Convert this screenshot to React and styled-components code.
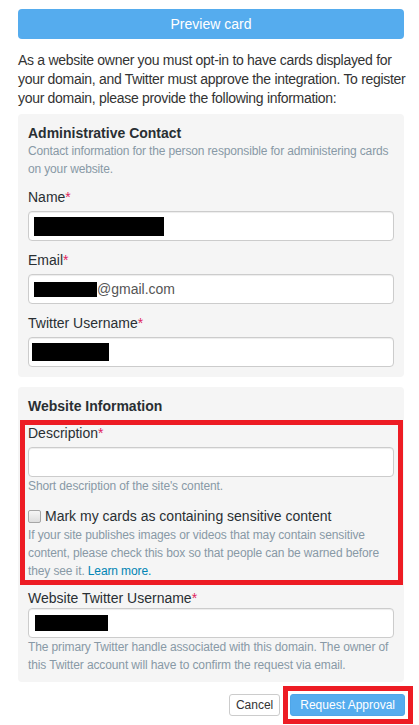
import React from 'react';
import styled, { createGlobalStyle } from 'styled-components';

const GlobalStyle = createGlobalStyle`
  body {
    margin: 0;
    background: #fff;
    font-family: "Liberation Sans", Arial, sans-serif;
    color: #333;
  }
`;

const Page = styled.div`
  padding: 9px 15px 0 18px;
`;

const PreviewButton = styled.button`
  display: block;
  width: 100%;
  height: 30px;
  border: none;
  border-radius: 4px;
  background: #55acee;
  color: #fff;
  font-family: inherit;
  font-size: 14px;
`;

const Intro = styled.p`
  margin: 12px 0 6px;
  font-size: 14px;
  line-height: 19px;
  letter-spacing: -0.3px;
  white-space: nowrap;
  color: #333;
`;

const Panel = styled.section`
  background: #f5f5f5;
  border-radius: 4px;
  padding: 10px 10px ${(p) => p.$pb ?? 10}px;
  margin-bottom: ${(p) => p.$mb ?? 10}px;
`;

const PanelTitle = styled.h3`
  margin: 0;
  font-size: 14px;
  line-height: 18px;
  font-weight: bold;
  color: #292f33;
`;

const PanelSub = styled.p`
  margin: 0 0 11px;
  font-size: 12px;
  line-height: 18px;
  letter-spacing: -0.15px;
  white-space: nowrap;
  color: #8899a6;
`;

const Field = styled.div`
  margin-top: ${(p) => p.$mt || 0}px;
  margin-bottom: 11px;
  &:last-child {
    margin-bottom: 0;
  }
`;

const Label = styled.div`
  font-size: 14px;
  line-height: 16px;
  color: #292f33;
  margin-bottom: ${(p) => (p.$tight ? 2 : 6)}px;
`;

const Req = styled.span`
  color: #e0245e;
`;

const InputBox = styled.div`
  box-sizing: border-box;
  height: 30px;
  display: flex;
  align-items: center;
  padding: 0 ${(p) => p.$pl || 5}px;
  background: #fff;
  border: 1px solid #ccc;
  border-radius: 4px;
  box-shadow: inset 0 1px 1px rgba(0, 0, 0, 0.075);
  font-size: 14px;
  color: #555;
`;

const Redaction = styled.span`
  display: inline-block;
  background: #000;
  width: ${(p) => p.$w}px;
  height: ${(p) => p.$h}px;
`;

const Help = styled.div`
  font-size: 12px;
  line-height: 18px;
  letter-spacing: -0.12px;
  white-space: nowrap;
  color: #8899a6;
`;

const Link = styled.a`
  color: #0084b4;
  text-decoration: none;
`;

const Highlight = styled.div`
  margin: 5px -9px 0 -8px;
  border: 5px solid #ed1c24;
  padding: 0 4px 0 3px;
`;

const CheckRow = styled.label`
  display: flex;
  align-items: center;
  gap: 4px;
  margin-top: 12px;
  font-size: 14px;
  line-height: 19px;
  color: #292f33;
`;

const CheckBox = styled.span`
  box-sizing: border-box;
  width: 13px;
  height: 13px;
  border: 1px solid #a6a6a6;
  border-radius: 2px;
  background: linear-gradient(#f6f6f6, #dedede);
`;

const Actions = styled.div`
  display: flex;
  justify-content: flex-end;
  align-items: center;
  gap: 3px;
  margin: 4px -9px 0 0;
`;

const CancelButton = styled.button`
  box-sizing: border-box;
  height: 22px;
  padding: 0 6px;
  border: 1px solid #ccc;
  border-radius: 3px;
  background: #fff;
  color: #333;
  font-family: inherit;
  font-size: 12px;
`;

const MarkBox = styled.div`
  display: flex;
  border: 5px solid #ed1c24;
  padding: 3px 3px 3px 2px;
`;

const ApproveButton = styled.button`
  box-sizing: border-box;
  height: 22px;
  padding: 0 9px;
  border: 1px solid #4fa6e8;
  border-radius: 3px;
  background: #55acee;
  color: #fff;
  font-family: inherit;
  font-size: 12px;
`;

export default function App() {
  return (
    <Page>
      <GlobalStyle />
      <PreviewButton>Preview card</PreviewButton>
      <Intro>
        As a website owner you must opt-in to have cards displayed for
        <br />
        your domain, and Twitter must approve the integration. To register
        <br />
        your domain, please provide the following information:
      </Intro>

      <Panel>
        <PanelTitle>Administrative Contact</PanelTitle>
        <PanelSub>
          Contact information for the person responsible for administering cards
          <br />
          on your website.
        </PanelSub>
        <Field>
          <Label>
            Name<Req>*</Req>
          </Label>
          <InputBox>
            <Redaction $w={130} $h={19} />
          </InputBox>
        </Field>
        <Field>
          <Label>
            Email<Req>*</Req>
          </Label>
          <InputBox>
            <Redaction $w={63} $h={15} />
            @gmail.com
          </InputBox>
        </Field>
        <Field>
          <Label>
            Twitter Username<Req>*</Req>
          </Label>
          <InputBox $pl={3}>
            <Redaction $w={77} $h={18} />
          </InputBox>
        </Field>
      </Panel>

      <Panel $pb={8} $mb={0}>
        <PanelTitle>Website Information</PanelTitle>
        <Highlight>
          <Label>
            Description<Req>*</Req>
          </Label>
          <InputBox />
          <Help>Short description of the site's content.</Help>
          <CheckRow>
            <CheckBox />
            Mark my cards as containing sensitive content
          </CheckRow>
          <Help>
            If your site publishes images or videos that may contain sensitive
            <br />
            content, please check this box so that people can be warned before
            <br />
            they see it. <Link href="#">Learn more.</Link>
          </Help>
        </Highlight>
        <Field $mt={5}>
          <Label $tight>
            Website Twitter Username<Req>*</Req>
          </Label>
          <InputBox $pl={6}>
            <Redaction $w={73} $h={16} />
          </InputBox>
          <Help>
            The primary Twitter handle associated with this domain. The owner of
            <br />
            this Twitter account will have to confirm the request via email.
          </Help>
        </Field>
      </Panel>

      <Actions>
        <CancelButton>Cancel</CancelButton>
        <MarkBox>
          <ApproveButton>Request Approval</ApproveButton>
        </MarkBox>
      </Actions>
    </Page>
  );
}
